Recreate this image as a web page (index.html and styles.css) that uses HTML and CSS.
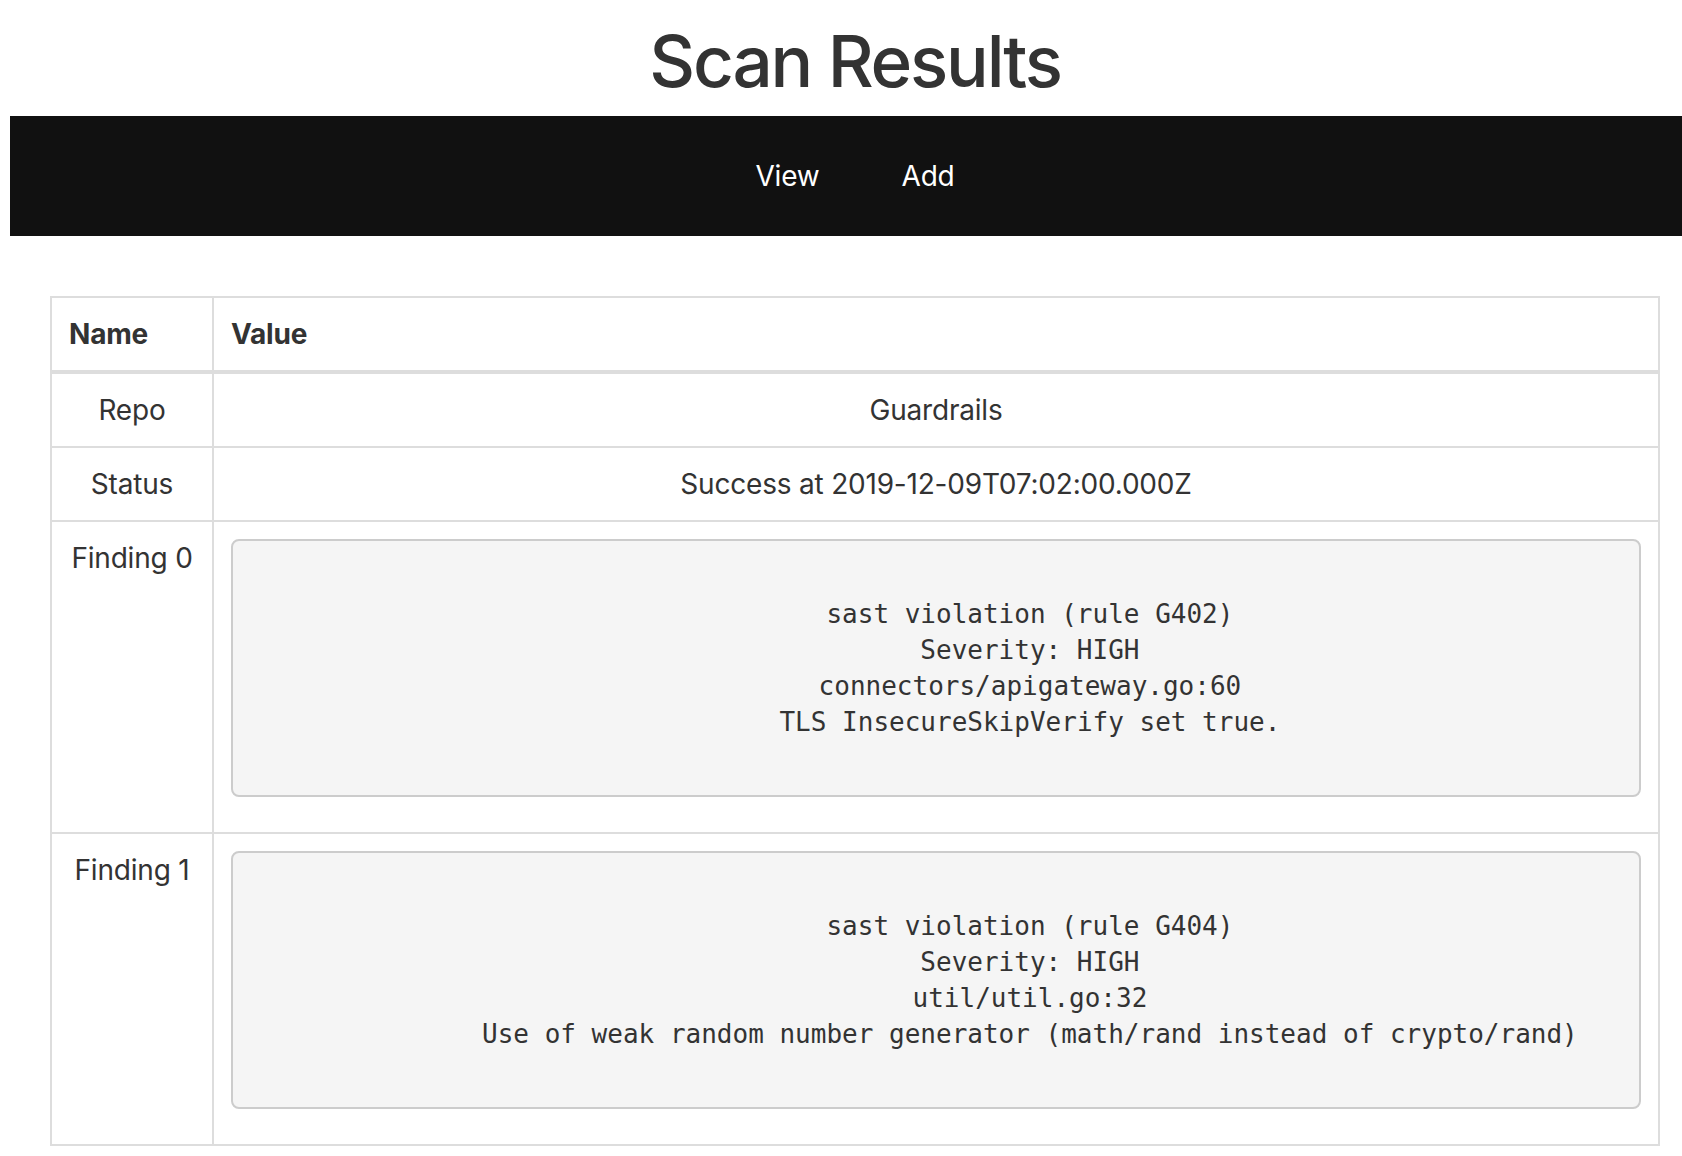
FILE: index.html
```html
<!DOCTYPE html>
<html lang="en">
<head>
<meta charset="utf-8">
<title>Scan Results</title>
<link rel="stylesheet" href="styles.css">
</head>
<body>
<div class="page">
  <h1 class="title">Scan Results</h1>
  <nav class="nav">
    <a class="nav-link" href="#">View</a>
    <a class="nav-link" href="#">Add</a>
  </nav>
  <main class="content">
    <table class="results">
      <thead>
        <tr>
          <th class="col-name">Name</th>
          <th class="col-value">Value</th>
        </tr>
      </thead>
      <tbody>
        <tr>
          <td class="cell-name">Repo</td>
          <td class="cell-value">Guardrails</td>
        </tr>
        <tr>
          <td class="cell-name">Status</td>
          <td class="cell-value">Success at 2019-12-09T07:02:00.000Z</td>
        </tr>
        <tr>
          <td class="cell-name">Finding 0</td>
          <td class="cell-value"><pre class="finding">

            sast violation (rule G402)
            Severity: HIGH
            connectors/apigateway.go:60
            TLS InsecureSkipVerify set true.
          </pre></td>
        </tr>
        <tr>
          <td class="cell-name">Finding 1</td>
          <td class="cell-value"><pre class="finding">

            sast violation (rule G404)
            Severity: HIGH
            util/util.go:32
            Use of weak random number generator (math/rand instead of crypto/rand)
          </pre></td>
        </tr>
      </tbody>
    </table>
  </main>
</div>
</body>
</html>
```

FILE: styles.css
```css
html, body {
  margin: 0;
  padding: 0;
  background: #ffffff;
  overflow: hidden;
}

.page {
  margin-left: 10px;
  width: 1690px;
  font-family: Inter, "Noto Sans", "Liberation Sans", sans-serif;
  font-size: 28px;
  line-height: 36px;
  letter-spacing: -0.2px;
  color: #333333;
}

.title {
  margin: 17px 0 11px;
  font-size: 71px;
  line-height: 88px;
  font-weight: 500;
  letter-spacing: -2.2px;
  text-align: center;
  color: #333333;
}

.nav {
  height: 120px;
  background: #111111;
  display: flex;
  justify-content: center;
  align-items: center;
  gap: 82px;
}

.nav-link {
  color: #ffffff;
  text-decoration: none;
  font-size: 28px;
  line-height: 36px;
}

.content {
  padding: 60px 40px 0;
}

.results {
  width: 100%;
  border-collapse: collapse;
}

.results th,
.results td {
  border: 2px solid #dddddd;
  padding: 17px;
  line-height: 38px;
  vertical-align: top;
}

.results th {
  text-align: left;
  font-weight: 700;
  border-bottom-width: 4px;
}

.col-name {
  width: 126px;
}

.cell-name,
.cell-value {
  text-align: center;
}

.finding {
  margin: 0 0 18px;
  padding: 19px;
  border: 2px solid #cccccc;
  border-radius: 8px;
  background: #f5f5f5;
  font-family: "DejaVu Sans Mono", "Liberation Mono", monospace;
  font-size: 26px;
  line-height: 36px;
  letter-spacing: 0;
  color: #333333;
  text-align: center;
  white-space: pre;
}
```
